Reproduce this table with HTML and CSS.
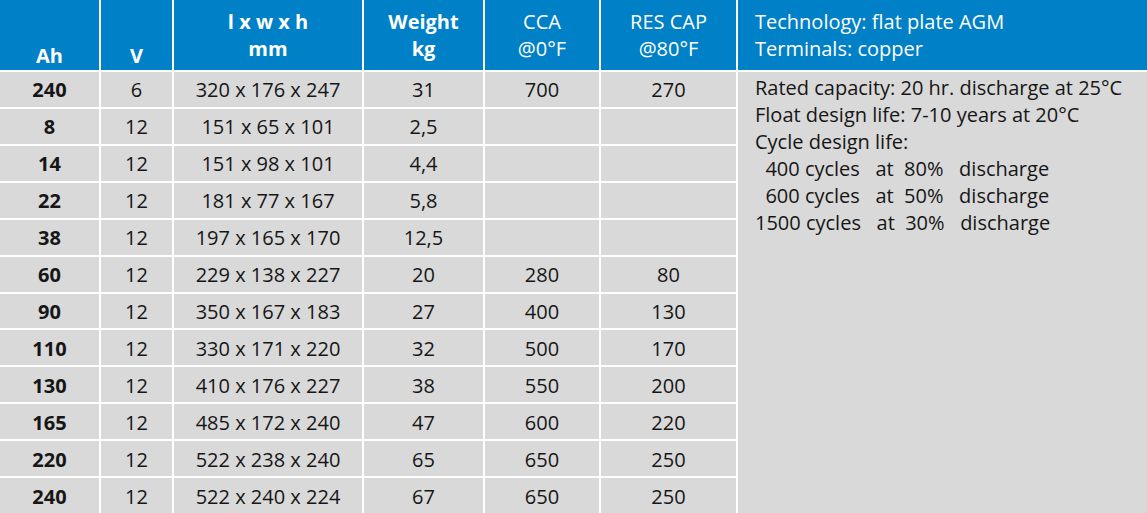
FILE: index.html
```html
<!DOCTYPE html>
<html lang="en">
<head>
<meta charset="utf-8">
<title>AGM battery specifications</title>
<link rel="stylesheet" href="styles.css">
</head>
<body>
<div class="table">
  <div class="hd bottom bold">Ah</div>
  <div class="hd bottom bold">V</div>
  <div class="hd bold"><span>l x w x h</span><span>mm</span></div>
  <div class="hd bold"><span>Weight</span><span>kg</span></div>
  <div class="hd"><span>CCA</span><span>@0°F</span></div>
  <div class="hd"><span>RES CAP</span><span>@80°F</span></div>
  <div class="hd info-hd"><span>Technology: flat plate AGM</span><span>Terminals: copper</span></div>

  <div class="c b">240</div><div class="c">6</div><div class="c">320 x 176 x 247</div><div class="c">31</div><div class="c">700</div><div class="c">270</div>
  <div class="info">
<div>Rated capacity: 20 hr. discharge at 25°C</div><div>Float design life: 7-10 years at 20°C</div><div>Cycle design life:</div><div class="pre">  400 cycles   at  80%   discharge</div><div class="pre">  600 cycles   at  50%   discharge</div><div class="pre">1500 cycles   at  30%   discharge</div>
  </div>
  <div class="c b">8</div><div class="c">12</div><div class="c">151 x 65 x 101</div><div class="c">2,5</div><div class="c"></div><div class="c"></div>
  <div class="c b">14</div><div class="c">12</div><div class="c">151 x 98 x 101</div><div class="c">4,4</div><div class="c"></div><div class="c"></div>
  <div class="c b">22</div><div class="c">12</div><div class="c">181 x 77 x 167</div><div class="c">5,8</div><div class="c"></div><div class="c"></div>
  <div class="c b">38</div><div class="c">12</div><div class="c">197 x 165 x 170</div><div class="c">12,5</div><div class="c"></div><div class="c"></div>
  <div class="c b">60</div><div class="c">12</div><div class="c">229 x 138 x 227</div><div class="c">20</div><div class="c">280</div><div class="c">80</div>
  <div class="c b">90</div><div class="c">12</div><div class="c">350 x 167 x 183</div><div class="c">27</div><div class="c">400</div><div class="c">130</div>
  <div class="c b">110</div><div class="c">12</div><div class="c">330 x 171 x 220</div><div class="c">32</div><div class="c">500</div><div class="c">170</div>
  <div class="c b">130</div><div class="c">12</div><div class="c">410 x 176 x 227</div><div class="c">38</div><div class="c">550</div><div class="c">200</div>
  <div class="c b">165</div><div class="c">12</div><div class="c">485 x 172 x 240</div><div class="c">47</div><div class="c">600</div><div class="c">220</div>
  <div class="c b">220</div><div class="c">12</div><div class="c">522 x 238 x 240</div><div class="c">65</div><div class="c">650</div><div class="c">250</div>
  <div class="c b">240</div><div class="c">12</div><div class="c">522 x 240 x 224</div><div class="c">67</div><div class="c">650</div><div class="c">250</div>
</div>
</body>
</html>
```
FILE: styles.css
```css
html, body {
  margin: 0;
  padding: 0;
  background: #ffffff;
}

body {
  font-family: "Open Sans", "Noto Sans", sans-serif;
  font-size: 20px;
  color: #161616;
}

.table {
  display: grid;
  grid-template-columns: 99px 71px 188px 119px 114px 135px 409px;
  grid-template-rows: 70px repeat(12, 1fr);
  gap: 2px;
  width: 1147px;
  height: 513px;
  background: #ffffff;
}

.hd {
  background: #0080c6;
  color: #ffffff;
  display: flex;
  flex-direction: column;
  align-items: center;
  justify-content: center;
  line-height: 27px;
}

.hd.bottom {
  justify-content: flex-end;
  padding-bottom: 1px;
}

.bold {
  font-weight: 700;
}

.info-hd {
  align-items: flex-start;
  padding-left: 17px;
}

.c {
  background: #d9d9d9;
  display: flex;
  align-items: center;
  justify-content: center;
  padding-top: 2px;
  line-height: 1;
}

.c.b {
  font-weight: 700;
}

.info {
  grid-column: 7;
  grid-row: 2 / span 12;
  background: #d9d9d9;
  padding: 2px 0 0 17px;
  line-height: 27px;
}

.pre {
  white-space: pre;
}
```
